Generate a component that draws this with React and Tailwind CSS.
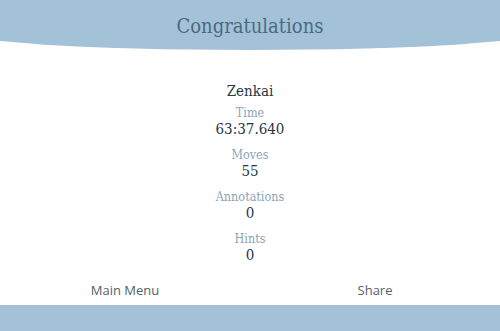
export default function App() {
  const stats = [
    { label: 'Time', value: '63:37.640' },
    { label: 'Moves', value: '55' },
    { label: 'Annotations', value: '0' },
    { label: 'Hints', value: '0' },
  ];

  return (
    <div className="w-[500px] h-[331px] bg-white flex flex-col overflow-hidden">
      {/* curved header */}
      <div className="h-[50px] overflow-hidden shrink-0">
        <div className="w-[600px] h-[50px] ml-[-50px] bg-[#a4c2d7] rounded-b-[300px_20px] flex justify-center pt-[12px]">
          <h1 className="text-[20px] leading-[28px] text-[#4a6a82] font-['DejaVu_Serif_Condensed','DejaVu_Serif',serif]">
            Congratulations
          </h1>
        </div>
      </div>

      <div className="flex-1 flex flex-col items-center pt-[31px] font-['DejaVu_Serif_Condensed','DejaVu_Serif',serif]">
        <div className="text-[15px] leading-[20px] text-[#263646]">Zenkai</div>
        {stats.map((s, i) => (
          <div key={s.label} className={`flex flex-col items-center ${i === 0 ? 'mt-[5px]' : 'mt-[10px]'}`}>
            <div className="text-[12.5px] leading-[14px] text-[#8aa4b8]">{s.label}</div>
            <div className="text-[15px] leading-[18px] text-[#263646]">{s.value}</div>
          </div>
        ))}
      </div>

      <div className="flex h-[28px] items-center text-[13px] text-[#56616c] font-['Open_Sans',sans-serif]">
        <div className="w-1/2 text-center">Main Menu</div>
        <div className="w-1/2 text-center">Share</div>
      </div>
      <div className="h-[26px] bg-[#a4c2d7] shrink-0" />
    </div>
  );
}
